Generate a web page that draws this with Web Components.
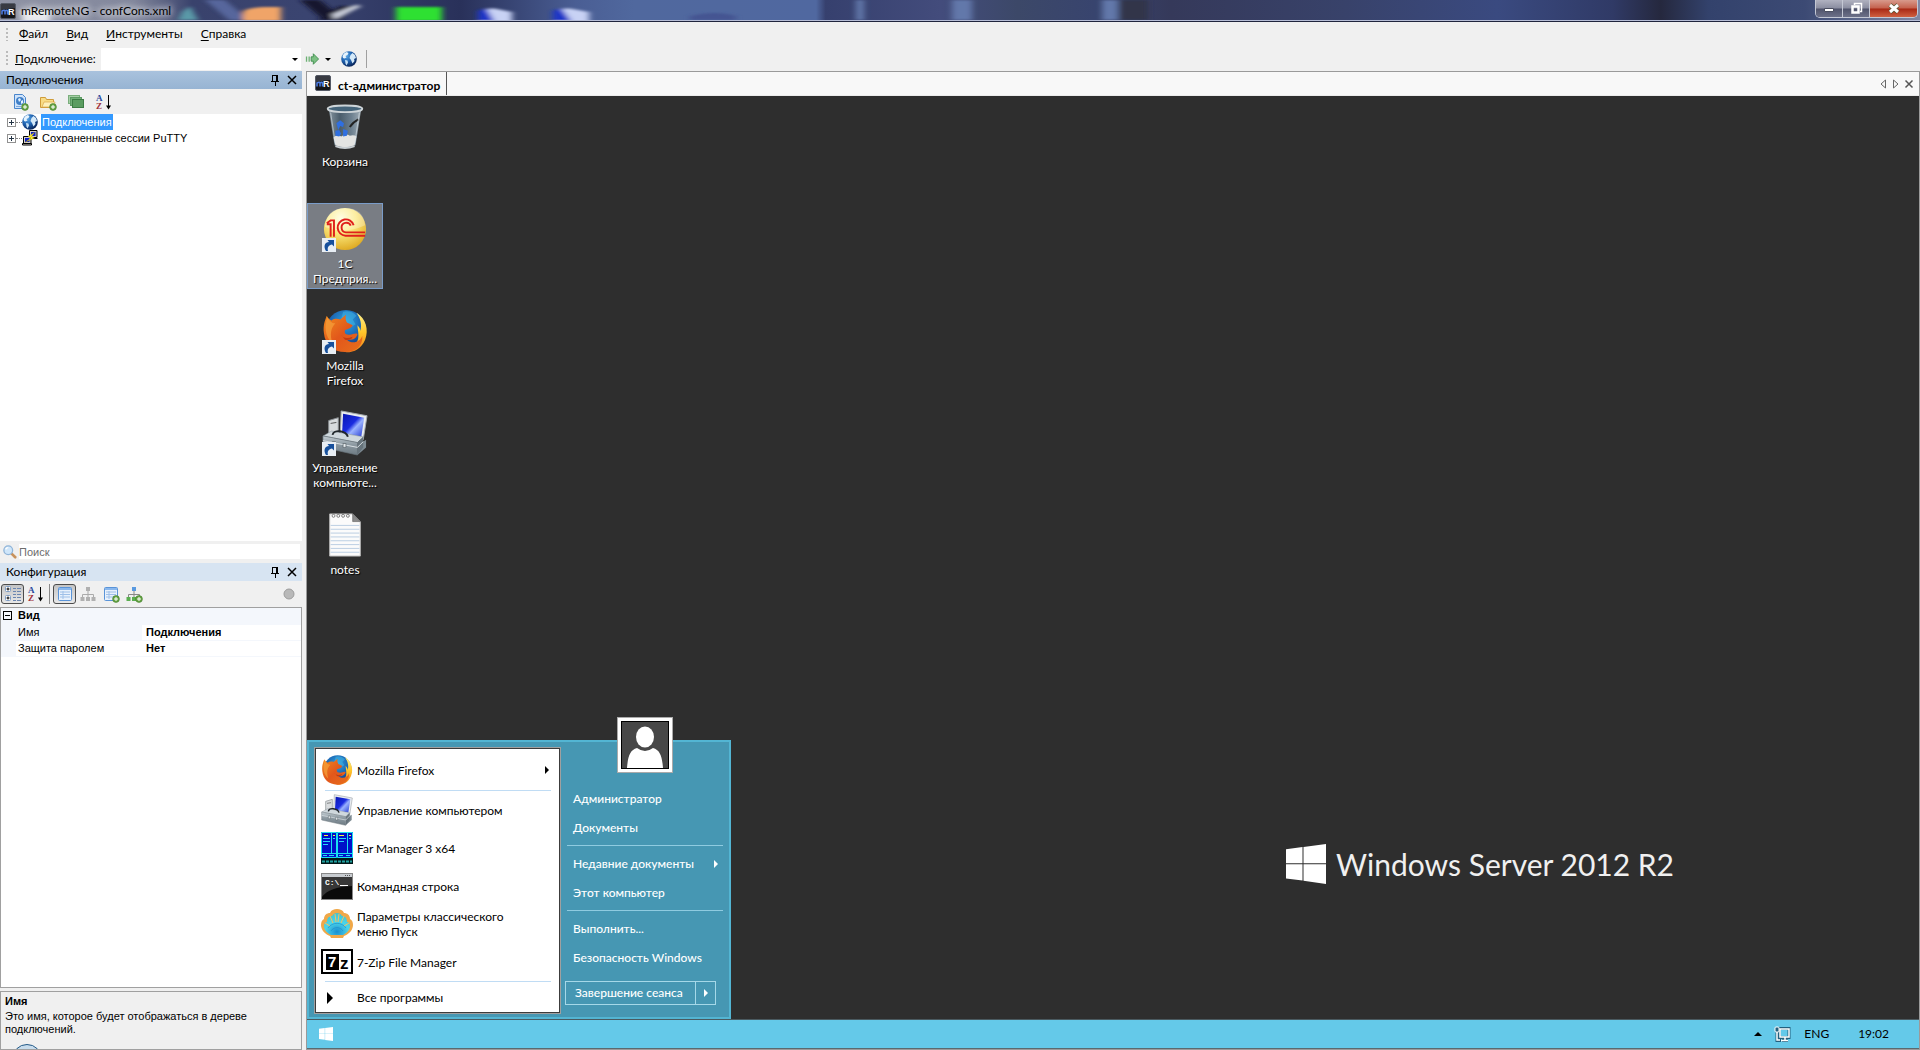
<!DOCTYPE html>
<html lang="ru">
<head>
<meta charset="utf-8">
<title>mRemoteNG - confCons.xml</title>
<style>
  html, body {
    height: 100%;
    margin: 0;
    overflow: hidden;
    background: #f0f0f0;
  }

  body {
    --ui: Lato, "Open Sans", sans-serif;
    --classic: "Liberation Sans", Arial, sans-serif;
    font-family: var(--ui);
    font-size: 12px;
    line-height: 16px;
    color: #000;
  }
</style>
</head>
<body>
<remote-app></remote-app>

<script>
// ---------- icons ----------

const FOX = `
  <defs>
    <radialGradient id="sea" cx=".5" cy=".3" r=".7"><stop offset="0" stop-color="#2fa6e0"/><stop offset=".6" stop-color="#1a5fae"/><stop offset="1" stop-color="#12306e"/></radialGradient>
    <linearGradient id="fur" x1="0" y1="0" x2="1" y2="1"><stop offset="0" stop-color="#f08a1e"/><stop offset=".5" stop-color="#e2571b"/><stop offset="1" stop-color="#e8701c"/></linearGradient>
    <linearGradient id="tail" x1="0" y1="0" x2="0" y2="1"><stop offset="0" stop-color="#fff08a"/><stop offset=".5" stop-color="#ffc52a"/><stop offset="1" stop-color="#f07c1a"/></linearGradient>
  </defs>
  <circle cx="25" cy="23" r="21" fill="url(#sea)"/>
  <path d="M22 4q8-2 14 4l-4 4 3 5-5 3-6-2-4-6z" fill="#3fb4e6" opacity=".55"/>
  <path d="M36 5c10 6 13 18 9 28-4 10-13 14-22 13 9-4 15-9 15-17 0-5-1-8-1-11 2 2 3 4 3 6 2-7 0-13-4-19z" fill="url(#tail)"/>
  <path d="M5 8c1 3 3 4 5 5 3-2 6-2 9-1l6-5c-1 4 0 6 1 8l6 3c-1 3-5 4-8 5-1 4 1 5 5 5 3 0 5-2 8-1-1 5-6 7-11 6 5 5 14 3 16-4 1 10-6 17-18 17C12 46 3 38 2 26 1 18 3 13 5 8z" fill="url(#fur)"/>
  <path d="M6 9c-4 9-3 21 5 28-3-9-2-16 3-21-4 0-7-3-8-7z" fill="#f6a13a" opacity=".7"/>
  <path d="M20 28c2 4 7 4 12 2-1 3-5 4-8 3z" fill="#c23a12"/>`;

const TOOLBOX = `
  <defs>
    <linearGradient id="scr" x1="0" y1="0" x2="1" y2="1"><stop offset="0" stop-color="#0716b0"/><stop offset=".45" stop-color="#1a2be0"/><stop offset=".6" stop-color="#9ab2ff"/><stop offset="1" stop-color="#2036d0"/></linearGradient>
    <linearGradient id="box" x1="0" y1="0" x2="0" y2="1"><stop offset="0" stop-color="#c4ced4"/><stop offset=".45" stop-color="#8d9aa2"/><stop offset="1" stop-color="#6d7a82"/></linearGradient>
  </defs>
  <path d="M7 11l10-3v20H7z" fill="#d9dcde" stroke="#8a8f93"/><path d="M9 14l6-1" stroke="#555"/>
  <path d="M20 1l27 5-4 25-24-4z" fill="#e9ecef" stroke="#a5abb0"/>
  <path d="M22 4l22 4-3 20-20-4z" fill="url(#scr)"/>
  <path d="M38 36l8-5v8l-9 8z" fill="#7e8b93"/>
  <path d="M1 27l9-5 33 6-6 6z" fill="#cfd8dd" stroke="#7b878e" stroke-width=".5"/>
  <path d="M37 34l6-6v11l-6 8z" fill="#66737b"/>
  <path d="M1 27l36 7v13L1 39z" fill="url(#box)" stroke="#69757c" stroke-width=".7"/>
  <path d="M1 32l36 7 6-6" fill="none" stroke="#dce3e7"/>
  <path d="M11 26c1-6 14-5 16 2" fill="none" stroke="#20262a" stroke-width="2"/>
  <path d="M11 33h3v4h-3zM22 35h3v4h-3z" fill="#e6ecef" stroke="#414b51" stroke-width=".6"/>`;

const PLUS = `<circle cx="13" cy="13" r="3.4" fill="#67a544" stroke="#3f7a2c" stroke-width=".6"/><path d="M13 11v4M11 13h4" stroke="#fff"/>`;

const GLOBE = `
  <defs><radialGradient id="g" cx=".35" cy=".3" r=".75"><stop offset="0" stop-color="#5aa6e4"/><stop offset=".5" stop-color="#1f62b0"/><stop offset="1" stop-color="#061f52"/></radialGradient></defs>
  <circle cx="8" cy="8" r="7.8" fill="url(#g)"/>
  <path d="M1.500 5q1-3 4-4l2 1-1 2-2 1 1 1.500-2 1L2 7z" fill="#e8f4fd"/>
  <path d="M4 9l2.500.5.5 2-1.500 3-1-2z" fill="#c4e0f6"/>
  <path d="M9.500 4l2-2 2.500 2 1 3-2 1 .5 2-2 2.500L10 9 8.500 7z" fill="#d4e9f9"/>`;

const AZ = `
  <text x="0" y="7" font-family="Liberation Serif" font-weight="700" font-size="9" fill="#28489c">A</text>
  <text x="0" y="15" font-family="Liberation Serif" font-weight="700" font-size="9" fill="#a0323c">Z</text>
  <path d="M12.500 1v12" stroke="#000"/><path d="M10 11.500h5l-2.500 4z"/>`;

const SHEET = `<rect x="1.500" y="1.500" width="13" height="13" rx="1" fill="#e8f1fc" stroke="#5a94d8"/><path d="M2 3h12" stroke="#8ab8ee" stroke-width="2"/><path d="M3 6h10M3 8.500h10M3 11h10M6 5v8" stroke="#9fc0e8"/>`;

const WINFLAG = `<path d="M0 5.300l16.500-2.200v16.200H0zM17.500 3L40 0v19.300H17.500zM0 20.300h16.500v16.300L0 34.500zM17.500 20.300H40V40l-22.500-3.200z" fill="#fff"/>`;

const ICONS = {
  mr: [16, `<rect x=".5" y=".5" width="15" height="15" rx="1.500" fill="#15161a" stroke="#555a66"/><path d="M1 1h14v4L1 7z" fill="#50545e" opacity=".6"/><path d="M2 11.500V8q3-1.500 3 0v3.500M5 8q2.500-1.500 2.500 0v3.500" fill="none" stroke="#4f7fe8" stroke-width="1.500"/><text x="8" y="12" font-family="Liberation Sans" font-weight="700" font-size="9" fill="#fff">R</text>`],
  globe: [16, GLOBE],
  az: [16, AZ],
  connect: [16, `<path d="M1 5h1.500v6H1zM4 5h1.500v6H4z" fill="#6cb073"/><path d="M7 5.500h2.500V2L15.500 8 9.500 14v-3.500H7z" fill="#7cc083" stroke="#3c8c4a"/>`],
  "new-connection": [16, `<path d="M2.500.5h8l3 3v11h-11z" fill="#cfe3fa" stroke="#4a86cc"/><circle cx="8" cy="7" r="4" fill="#3f7fc8"/><path d="M6 5l2-1 1 2-2 2zM9 7l2-1v3l-2 1z" fill="#e4f2ff"/><path d="M4 12.500h5" stroke="#7aa8dc"/>${PLUS}`],
  "new-folder": [16, `<path d="M.5 3.500h5l1 2h7v8H.5z" fill="#f8dc86" stroke="#cf9c3a"/><path d="M2 13l2-5h11l-1 5z" fill="#fdf0bc" stroke="#d8a848" stroke-width=".7"/>${PLUS}`],
  stack: [16, `<rect x=".5" y="1.500" width="11" height="8" fill="#a6cfa6" stroke="#7aae7c"/><rect x="2.500" y="3.500" width="11" height="8" fill="#72b078" stroke="#5c9a62"/><rect x="4.500" y="5.500" width="11" height="8" fill="#5a9c60" stroke="#3c7c44"/>`],
  putty: [16, `
    <path d="M7.500.5h7.500v7H7.500z" fill="#d4d0c8" stroke="#000"/><path d="M9 2h4.500v4H9z" fill="#1020c8"/><path d="M9 8.500h6.500" stroke="#000"/>
    <path d="M1.500 6.500H9v7H1.500z" fill="#d4d0c8" stroke="#000"/><path d="M3 8h4.500v4H3z" fill="#1020c8"/><path d="M.5 15h9v-1.500h-9z" fill="#d4d0c8" stroke="#000"/>
    <path d="M12.500 2.500L6 6.500l3 1.500-5.500 4 9-4-3-1.500z" fill="#ffee28" stroke="#a89800" stroke-width=".4"/>`],
  search: [16, `<path d="M9.500 9.500l4.500 4.500" stroke="#c8925c" stroke-width="3" stroke-linecap="round"/><circle cx="6" cy="6" r="5" fill="#cfe6fa" stroke="#8fb4d8" stroke-width="1.500"/><path d="M3 5q1-2 3-2" stroke="#fff" fill="none" stroke-width="1.500"/>`],
  pin: [16, `<path d="M5.500 9V3.500h5V9M9.500 4v5M4 9.500h8M8.500 10v4" fill="none" stroke="#000" shape-rendering="crispEdges"/>`],
  close: [16, `<path d="M4 4l8 8M12 4l-8 8" stroke="#000" stroke-width="1.500"/>`],
  categories: [20, `<rect x="2.500" y="2.500" width="5" height="5" rx="1" fill="#fff" stroke="#7e9cc4"/><path d="M3.500 5h3M5 3.500v3" stroke="#000"/><rect x="2.500" y="11.500" width="5" height="5" rx="1" fill="#fff" stroke="#7e9cc4"/><path d="M3.500 14h3M5 12.500v3" stroke="#000"/><path d="M10 4.500h3M14 4.500h4M10 7.500h3M14 7.500h4M10 10.500h3M14 10.500h4M10 13.500h3M14 13.500h4M10 16.500h3M14 16.500h4" stroke="#6b86b0"/>`],
  sheet: [16, SHEET],
  "sheet-add": [16, SHEET + PLUS],
  inherit: [16, `<path d="M8 5v3M2.500 11V8.500h11V11M8 8v3" fill="none" stroke="#aaa"/><path d="M6 1h4v4H6zM.5 11h4v4h-4zM6 11h4v4H6zM11.500 11h4v4h-4z" fill="#b0b0b0"/>`],
  "inherit-add": [16, `<path d="M8 5v3M2.500 11V8.500h11V11M8 8v3" fill="none" stroke="#888"/><path d="M6 1h4v4H6z" fill="#5a9ae0"/><path d="M.5 11h4v4h-4zM6 11h4v4H6z" fill="#5aae50"/>${PLUS}`],
  status: [16, `<circle cx="8" cy="8" r="5" fill="#b8b8b8" stroke="#9c9c9c"/>`],
  recycle: [48, `
    <defs><linearGradient id="can" x1="0" x2="1"><stop offset="0" stop-color="#8d9eaa"/><stop offset=".35" stop-color="#4d6272"/><stop offset=".7" stop-color="#74899a"/><stop offset="1" stop-color="#aebcc6"/></linearGradient></defs>
    <path d="M7 5l6 38q11 5 22 0l6-38z" fill="url(#can)" opacity=".9"/>
    <path d="M12 35q4-4 8-1 5-4 9-1 5-1 7 1l-2 9q-10 4-20 0z" fill="#e4e4e2"/>
    <path d="M15 20l4-3 4 3-1 4-3-1-2 4zM14 28l4-1 2 4-2 3-4-1zM22 26l5 2-1 5-4 1v-3z" fill="#2f6fe0"/>
    <path d="M38 16q-6 3-9 8" stroke="#222" fill="none" stroke-width="2"/>
    <ellipse cx="24" cy="5" rx="18" ry="3.500" fill="#45647a" stroke="#cdd4d8" stroke-width="2"/>
    <path d="M9 9l5 33M39 9l-5 33" stroke="#dde5ea" opacity=".6"/>
    <path d="M14 44q10 4 20 0" stroke="#c8ced2" stroke-width="2" fill="none"/>`],
  onec: [48, `
    <defs><radialGradient id="ball" cx=".4" cy=".25" r=".8"><stop offset="0" stop-color="#fffdd8"/><stop offset=".45" stop-color="#fbe77a"/><stop offset="1" stop-color="#dca51c"/></radialGradient></defs>
    <circle cx="24" cy="24" r="22" fill="url(#ball)"/>
    <path d="M3 22q20 8 42-2-2-18-21-18T3 22z" fill="#fff" opacity=".3"/>
    <g fill="none" stroke="#e0201c" stroke-width="2">
      <path d="M5 18l4-3h3.500v17M5 19h4v13"/>
      <path d="M33 20a8.500 8.500 0 1 0-8.500 11H45M30 20.500a5 5 0 1 0-5 7H45"/>
    </g>`],
  firefox: [48, FOX],
  toolbox: [48, TOOLBOX],
  notes: [48, `
    <path d="M8 2h24l8 8v36H8z" fill="#fbfbfb" stroke="#b8b8b8"/>
    <path d="M9 14h30M9 18h30M9 22h30M9 26h30M9 30h30M9 34h30M9 38h30M9 42h30" stroke="#b9cde2"/>
    <g fill="#fff" stroke="#777"><circle cx="12" cy="4" r="1.500"/><circle cx="17" cy="4" r="1.500"/><circle cx="22" cy="4" r="1.500"/><circle cx="27" cy="4" r="1.500"/></g>
    <path d="M32 2v8h8z" fill="#8a8a8a" stroke="#555" stroke-width=".6"/>`],
  far: [32, `
    <rect width="32" height="32" fill="#0010c8"/><path d="M0 26h32v6H0z" fill="#001818"/>
    <path d="M.5.5h15v25H.5zM16.500.5h15v25h-15zM10.500 0v21M26.500 0v21M0 21.500h32" fill="none" stroke="#18e0f0"/>
    <path d="M3 3.500h4M12 3.500h2M18 3.500h5M28 3.500h2" stroke="#f8f040"/>
    <path d="M2 6.500h7M2 9.500h7M2 12.500h5M18 6.500h7M18 9.500h5M28 6.500h2M12 6.500h2M2 23.500h4M8 23.500h5M18 23.500h4M25 23.500h4" stroke="#28d8f8"/>
    <path d="M1 29.500h30" stroke="#20a0a0" stroke-width="2" stroke-dasharray="3 1"/>`],
  cmd: [32, `
    <rect x=".5" y="3.500" width="31" height="26" fill="#0a0a0a" stroke="#888"/><path d="M1 4h30v3H1z" fill="#c8ccd0"/><path d="M24 5.500h6" stroke="#555" stroke-dasharray="1 1"/>
    <path d="M1 7h30v9Q8 17 1 27z" fill="#555" opacity=".6"/>
    <text x="4" y="15" font-family="Liberation Mono" font-weight="700" font-size="8" fill="#fff">C:\\</text><path d="M19 15.500h8" stroke="#fff"/>`],
  shell: [32, `
    <defs><radialGradient id="sh" cx=".5" cy=".85" r=".9"><stop offset="0" stop-color="#1a8ed0"/><stop offset=".5" stop-color="#4cd6ea"/><stop offset="1" stop-color="#40c0cc"/></radialGradient></defs>
    <path d="M9 28c-5-2-9-6-9-11 0-3 1-5 3-6 0-4 3-6 6-6 1-3 4-4 7-4s6 1 7 4c3 0 6 2 6 6 2 1 3 3 3 6 0 5-4 9-9 11l-1 2H10z" fill="#f0a848"/>
    <path d="M10 27c-4-2-7-5-7-9 0-2 1-4 3-4 0-4 2-6 5-6 1-2 3-3 5-3s4 1 5 3c3 0 5 2 5 6 2 0 3 2 3 4 0 4-3 7-7 9z" fill="url(#sh)"/>
    <path d="M15 14l-1-8M12 15L9 8M9 18l-5-3M17 14l1-8M20 15l3-7M23 18l5-3" stroke="#f4c060" fill="none"/>
    <path d="M10 23a7 7 0 0 1 12 0M7 20a11 11 0 0 1 18 0" stroke="#1c88c8" fill="none" opacity=".6"/>`],
  sevenzip: [32, `
    <rect x="1" y="4" width="30" height="23" fill="#fff" stroke="#000" stroke-width="2"/><rect x="5" y="8" width="13" height="16"/>
    <text x="7" y="21" font-family="Liberation Sans" font-weight="700" font-size="15" fill="#fff">7</text>
    <text x="19" y="23" font-family="Liberation Sans" font-weight="700" font-size="17" fill="#000">z</text>`],
  flag: [40, WINFLAG],
  shortcut: [14, `<rect width="14" height="14" fill="#e8eef4"/><path d="M4 13c-3-5-1-9 3-9L5.500 2H12v6.500L10 6.500C7 7 5 9 6 13z" fill="#17509c"/>`],
  user: [46, `<path d="M0 0h46v46H0z" fill="#474747"/><ellipse cx="23" cy="15" rx="9" ry="10.500" fill="#fff"/><path d="M5 46c1-12 3-18 10-20q8 6 16 0c7 2 9 8 10 20z" fill="#fff"/>`],
  network: [16, `
    <path d="M5 2.500h10v9H5zM8 14.500h6M11 12v2" fill="none" stroke="#23607e" stroke-width="3"/><path d="M3 6v8.500h4" fill="none" stroke="#23607e" stroke-width="3"/>
    <path d="M6 3h9v8H6zM7 14.500h7M11 11v3M3 6v8h3" fill="none" stroke="#fff" stroke-width="1.500"/>
    <rect x="1" y="1" width="4" height="5" rx="1" fill="#23607e" stroke="#fff"/>`],
  right: [8, `<path d="M2 0l4 4-4 4z" fill="currentColor"/>`],
  down: [8, `<path d="M1 3h6L4 6z" fill="currentColor"/>`],
  up: [8, `<path d="M0 6h8L4 2z" fill="currentColor"/>`],
  "tab-left": [10, `<path d="M7.500 1v8L3 5z" fill="none" stroke="#666"/>`],
  "tab-right": [10, `<path d="M2.500 1v8L7 5z" fill="none" stroke="#666"/>`],
  "tab-close": [10, `<path d="M1.500 1.500l7 7M8.500 1.500l-7 7" stroke="#555" stroke-width="1.500"/>`]
};

class UiIcon extends HTMLElement {
  connectedCallback() {
    const [box, body] = ICONS[this.getAttribute("name")];
    const size = this.getAttribute("size") || box;
    this.attachShadow({ mode: "open" }).innerHTML = `
      <style>
        :host { display: inline-block; flex: none; line-height: 0; }
        svg { display: block; overflow: visible; }
      </style>
      <svg width="${size}" height="${size}" viewBox="0 0 ${box} ${box}" aria-hidden="true">${body}</svg>
    `;
  }
}

// Shared by every element that holds plain controls
const RESET = `
  button, input, select {
    margin: 0;
    padding: 0;
    border: 0;
    background: none;
    font: inherit;
    color: inherit;
    text-align: left;
  }
  button { display: flex; align-items: center; }
`;

class BaseElement extends HTMLElement {
  connectedCallback() {
    if (this.shadowRoot) return;
    this.attachShadow({ mode: "open" }).innerHTML = `<style>${RESET}</style>${this.template()}`;
  }
}

// ---------- window chrome ----------

class TitleBar extends BaseElement {
  template() {
    return `
      <style>
        :host {
          display: grid;
          height: 21px;
          border-bottom: 1px solid #20253e;
          overflow: hidden;
        }
        .glass, .row { grid-area: 1 / 1; min-width: 0; }
        .glass { width: 100%; height: 20px; display: block; border-bottom: 1px solid #b6bdd6; }
        .row { display: flex; justify-content: space-between; z-index: 1; }
        .caption { display: flex; align-items: center; gap: 5px; padding-right: 4px; }
        .caption span { text-shadow: 0 0 6px #fff, 0 0 10px #fff; }
        .buttons {
          display: flex;
          height: 17px;
          margin-right: 2px;
          border: 1px solid #c4c8d4;
          border-top: 0;
          border-radius: 0 0 5px 5px;
          overflow: hidden;
        }
        .buttons button {
          width: 27px;
          justify-content: center;
          border-right: 1px solid #c4c8d4;
          background: linear-gradient(#b0b2c0, #8a8da0 48%, #50546c 52%, #6c7088);
        }
        .buttons .x {
          width: 47px;
          border: 0;
          background: linear-gradient(#d89a8c, #c4604c 48%, #a82814 52%, #d06040);
        }
      </style>
      <svg class="glass" viewBox="0 0 1920 20" preserveAspectRatio="none" aria-hidden="true">
        <defs>
          <linearGradient id="base">
            <stop offset="0" stop-color="#8f93a4"/><stop offset=".07" stop-color="#82879c"/>
            <stop offset=".1" stop-color="#39426c"/><stop offset=".16" stop-color="#3a4470"/>
            <stop offset=".24" stop-color="#29315a"/><stop offset=".3" stop-color="#4a5e94"/>
            <stop offset=".33" stop-color="#50689e"/><stop offset=".425" stop-color="#5068a0"/>
            <stop offset=".43" stop-color="#36406e"/><stop offset=".49" stop-color="#434c7c"/>
            <stop offset=".53" stop-color="#3c4868"/><stop offset=".57" stop-color="#38446e"/>
            <stop offset=".61" stop-color="#35395a"/><stop offset=".7" stop-color="#38426a"/>
            <stop offset=".78" stop-color="#3a4a80"/><stop offset=".84" stop-color="#303a66"/>
            <stop offset=".865" stop-color="#25283e"/><stop offset=".89" stop-color="#33426c"/>
            <stop offset=".94" stop-color="#3c4a74"/><stop offset="1" stop-color="#8088a4"/>
          </linearGradient>
          <filter id="soft" x="-20%" width="140%" y="-40%" height="180%"><feGaussianBlur stdDeviation="3 1"/></filter>
        </defs>
        <path d="M0 0h1920v20H0z" fill="url(#base)"/>
        <g filter="url(#soft)">
          <path d="M22 10h28v14H22z" fill="#e4e6ec"/>
          <path d="M182 12l8-6 8 14h-20z" fill="#5a9aa8"/>
          <path d="M205 0h20l24 20h-20z" fill="#56669c"/>
          <path d="M243 12q2-4 20-5h18v14h-38z" fill="#f0a468"/>
          <path d="M300 0h20l24 20h-20zM340 6h18l-18 14h-22z" fill="#14182e"/>
          <path d="M332 14l26-10 2 3-26 13z" fill="#c8ccd8"/>
          <path d="M396 7h46v14h-46z" fill="#2ee030"/>
          <path d="M478 12l14-4 20 4v10h-34z" fill="#c8d2f4"/><path d="M478 11l8-3 8 13h-16z" fill="#1a34c8"/>
          <path d="M553 12l14-4 22 4v10h-36z" fill="#c8d2f4"/><path d="M553 11l8-3 10 13h-18z" fill="#1a34c8"/>
          <path d="M690 16q26-6 46 0v4h-46z" fill="#445492"/>
          <path d="M856 0h8v20h-8zM952 0h20v20h-20zM1102 0h16v20h-16z" fill="#6278aa"/>
          <path d="M1120 0h28v20h-28z" fill="#30344a"/>
        </g>
      </svg>
      <div class="row">
        <div class="caption"><ui-icon name="mr"></ui-icon><span>mRemoteNG - confCons.xml</span></div>
        <div class="buttons">
          <button aria-label="Свернуть"><svg width="12" height="8"><path d="M1.500 3.500h9v3h-9z" fill="#fff" stroke="#4a4e60"/></svg></button>
          <button aria-label="Свернуть в окно"><svg width="13" height="13"><path d="M4.500 3V1.500h7v8H10" fill="none" stroke="#fff" stroke-width="1.500"/><path d="M2.500 4.500h6v6h-6z" fill="none" stroke="#fff" stroke-width="2.500"/></svg></button>
          <button class="x" aria-label="Закрыть"><svg width="12" height="11"><path d="M2 2l8 7M10 2L2 9" stroke="#553" stroke-width="4.500"/><path d="M2 2l8 7M10 2L2 9" stroke="#fff" stroke-width="3"/></svg></button>
        </div>
      </div>
    `;
  }
}

class MenuBar extends BaseElement {
  template() {
    const items = ["Файл", "Вид", "Инструменты", "Справка"];
    return `
      <style>
        :host { display: block; height: 24px; padding-left: 6px; }
        nav { display: flex; align-items: center; height: 100%; gap: 18px; }
        nav::before {
          content: "";
          width: 2px;
          height: 13px;
          margin-right: -7px;
          background: repeating-linear-gradient(#bbb 0 2px, transparent 2px 4px);
        }
        u { text-underline-offset: 2px; }
      </style>
      <nav>${items.map((t) => `<button><span><u>${t[0]}</u>${t.slice(1)}</span></button>`).join("")}</nav>
    `;
  }
}

class QuickConnect extends BaseElement {
  template() {
    return `
      <style>
        :host { display: flex; align-items: center; height: 25px; padding-left: 6px; }
        :host::before {
          content: "";
          width: 2px;
          height: 16px;
          margin-right: 7px;
          background: repeating-linear-gradient(#bbb 0 2px, transparent 2px 4px);
        }
        label { width: 86px; }
        .combo { display: grid; align-items: center; width: 200px; height: 22px; background: #fff; }
        .combo > * { grid-area: 1 / 1; }
        select { appearance: none; width: 100%; height: 22px; padding: 0 14px 0 4px; }
        .combo ui-icon { justify-self: end; margin-right: 2px; pointer-events: none; }
        .go { gap: 5px; margin-left: 4px; }
        .web { margin-left: 9px; }
        i { width: 1px; height: 18px; margin-left: 9px; background: #a0a0a0; }
      </style>
      <label for="host"><u>П</u>одключение:</label>
      <span class="combo">
        <select id="host"><option></option></select>
        <ui-icon name="down" size="8"></ui-icon>
      </span>
      <button class="go" aria-label="Подключить"><ui-icon name="connect" size="14"></ui-icon><ui-icon name="down" size="8"></ui-icon></button>
      <button class="web" aria-label="Интернет"><ui-icon name="globe"></ui-icon></button>
      <i></i>
    `;
  }
}

// ---------- left side ----------

class DockPanel extends BaseElement {
  template() {
    return `
      <style>
        :host { display: flex; flex-direction: column; min-height: 0; }
        header {
          display: flex;
          align-items: center;
          height: 18px;
          padding: 0 2px 0 6px;
          background: var(--panel-head, #d7e4f2);
        }
        h2 { flex: 1; margin: 0; font: inherit; }
        header button + button { margin-left: 1px; }
      </style>
      <header>
        <h2>${this.getAttribute("caption")}</h2>
        <button aria-label="Закрепить"><ui-icon name="pin"></ui-icon></button>
        <button aria-label="Закрыть"><ui-icon name="close"></ui-icon></button>
      </header>
      <slot></slot>
    `;
  }
}

class ConnectionTree extends BaseElement {
  template() {
    return `
      <style>
        :host {
          display: flex;
          flex: 1;
          flex-direction: column;
          min-height: 0;
          font-family: var(--classic);
          font-size: 11px;
        }
        .tools { display: flex; align-items: center; gap: 12px; height: 25px; padding-left: 12px; }
        ul { flex: 1; margin: 0; padding: 0 0 0 7px; list-style: none; background: #fff; }
        li { display: flex; align-items: center; height: 16px; }
        .box {
          width: 7px;
          height: 7px;
          border: 1px solid #919191;
          background:
            linear-gradient(#234, #234) center / 5px 1px no-repeat,
            linear-gradient(#234, #234) center / 1px 5px no-repeat,
            #fff;
        }
        .dots { width: 6px; border-top: 1px dotted #808080; }
        .name { padding: 0 1px; margin-left: 3px; }
        .selected .name { background: #3399ff; color: #fff; }
        .search {
          display: flex;
          align-items: center;
          gap: 2px;
          height: 22px;
          padding: 0 2px 1px 3px;
          box-sizing: border-box;
        }
        .search input { flex: 1; min-width: 0; height: 15px; background: #fff; outline: 0; }
        input::placeholder { color: #6d6d6d; opacity: 1; }
      </style>
      <div class="tools">
        <button aria-label="Новое подключение"><ui-icon name="new-connection"></ui-icon></button>
        <button aria-label="Новая папка"><ui-icon name="new-folder"></ui-icon></button>
        <button aria-label="Вид"><ui-icon name="stack"></ui-icon></button>
        <button aria-label="Сортировка"><ui-icon name="az"></ui-icon></button>
      </div>
      <ul role="tree">
        <li role="treeitem" class="selected"><span class="box"></span><span class="dots"></span><ui-icon name="globe"></ui-icon><span class="name">Подключения</span></li>
        <li role="treeitem"><span class="box"></span><span class="dots"></span><ui-icon name="putty"></ui-icon><span class="name">Сохраненные сессии PuTTY</span></li>
      </ul>
      <div class="search"><ui-icon name="search" size="14"></ui-icon><input type="text" placeholder="Поиск" aria-label="Поиск"></div>
    `;
  }
}

class PropertyGrid extends BaseElement {
  template() {
    return `
      <style>
        :host {
          display: flex;
          flex: 1;
          flex-direction: column;
          min-height: 0;
          font-family: var(--classic);
          font-size: 11px;
        }
        .tools { display: flex; align-items: center; height: 26px; padding: 0 5px 0 1px; }
        .tools button { justify-content: center; width: 23px; height: 20px; }
        .tools .on {
          width: 21px;
          height: 18px;
          border: 1px solid #4c4c4c;
          border-radius: 3px;
          background: linear-gradient(#c4c4c4, #e8e8e8);
          box-sizing: content-box;
        }
        .tools i { width: 1px; height: 20px; margin: 0 3px 0 2px; background: #8a8a8a; }
        .tools .last { margin-left: auto; width: 16px; }
        .grid { flex: 1; border: 1px solid #a0a0a0; background: #fff; }
        table { width: 100%; border-collapse: collapse; table-layout: fixed; }
        th, td { height: 16px; padding: 0; line-height: 15px; text-align: left; border-bottom: 1px solid #f4f7fc; box-sizing: border-box; }
        .gutter { width: 15px; background: #f4f7fc; }
        .key { width: 126px; font-weight: 400; padding-left: 2px; }
        .group th { background: #f4f7fc; padding-left: 2px; }
        .group th.gutter { padding: 0; }
        td { padding-left: 4px; font-weight: 700; }
        .current .key { background: #f4f7fc; }
        .minus {
          display: block;
          width: 7px;
          height: 7px;
          margin-left: 2px;
          border: 1px solid #000;
          background: linear-gradient(#000, #000) center / 5px 1px no-repeat;
        }
        .help {
          height: 57px;
          margin-top: 3px;
          padding-left: 4px;
          border: 1px solid #a0a0a0;
          overflow: hidden;
        }
        h3, p { margin: 0; font-size: 11px; line-height: 13px; }
        h3 { margin: 2px 0; line-height: 14px; }
        .ring {
          width: 28px;
          height: 28px;
          margin: 8px 0 0 7px;
          border: 1px solid #245a88;
          border-radius: 50%;
          background: #c8dcec;
        }
      </style>
      <div class="tools">
        <button class="on" aria-label="По категориям"><ui-icon name="categories" size="20"></ui-icon></button>
        <button aria-label="По алфавиту"><ui-icon name="az"></ui-icon></button>
        <i></i>
        <button class="on" aria-label="Свойства"><ui-icon name="sheet"></ui-icon></button>
        <button aria-label="Наследование"><ui-icon name="inherit"></ui-icon></button>
        <button aria-label="Свойства по умолчанию"><ui-icon name="sheet-add"></ui-icon></button>
        <button aria-label="Наследование по умолчанию"><ui-icon name="inherit-add"></ui-icon></button>
        <button class="last" aria-label="Состояние"><ui-icon name="status"></ui-icon></button>
      </div>
      <div class="grid">
        <table>
          <colgroup><col style="width: 15px"><col style="width: 126px"><col></colgroup>
          <tr class="group"><th class="gutter"><span class="minus"></span></th><th colspan="2">Вид</th></tr>
          <tr class="current"><td class="gutter"></td><th class="key">Имя</th><td>Подключения</td></tr>
          <tr><td class="gutter"></td><th class="key">Защита паролем</th><td>Нет</td></tr>
        </table>
      </div>
      <div class="help">
        <h3>Имя</h3>
        <p>Это имя, которое будет отображаться в дереве подключений.</p>
        <div class="ring"></div>
      </div>
    `;
  }
}

// ---------- remote session ----------

class TabStrip extends BaseElement {
  template() {
    return `
      <style>
        :host {
          display: flex;
          align-items: stretch;
          justify-content: space-between;
          height: 23px;
          padding-right: 5px;
          border-bottom: 1px solid #ececec;
          background: #f8f8f8;
        }
        .tab {
          gap: 7px;
          padding: 0 6px 0 8px;
          border-right: 1px solid #555;
          font-weight: 700;
        }
        .tab ui-icon { padding-bottom: 2px; }
        .tab span { padding-top: 4px; }
        .nav { display: flex; align-items: center; gap: 3px; }
      </style>
      <button class="tab"><ui-icon name="mr"></ui-icon><span>ct-администратор</span></button>
      <div class="nav">
        <button aria-label="Назад"><ui-icon name="tab-left"></ui-icon></button>
        <button aria-label="Вперёд"><ui-icon name="tab-right"></ui-icon></button>
        <button aria-label="Закрыть"><ui-icon name="tab-close"></ui-icon></button>
      </div>
    `;
  }
}

class DesktopIcon extends BaseElement {
  template() {
    const link = this.hasAttribute("shortcut") ? `<ui-icon class="link" name="shortcut"></ui-icon>` : "";
    return `
      <style>
        :host { display: block; }
        button {
          flex-direction: column;
          gap: 4px;
          width: 76px;
          height: 86px;
          padding-top: 2px;
          border: 1px solid transparent;
          color: #fff;
          line-height: 15px;
        }
        :host([selected]) button { border-color: #7a9cc8; background: #797d84; }
        .art { display: grid; }
        .art > * { grid-area: 1 / 1; }
        .link { align-self: end; z-index: 1; }
        .label { text-align: center; text-shadow: 1px 1px 1px #000; }
      </style>
      <button>
        <span class="art"><ui-icon name="${this.getAttribute("icon")}" size="46"></ui-icon>${link}</span>
        <span class="label"><slot></slot></span>
      </button>
    `;
  }
}

class StartItem extends BaseElement {
  template() {
    const icon = this.getAttribute("icon");
    const arrow = this.hasAttribute("submenu") ? `<ui-icon name="right" size="8"></ui-icon>` : "";
    return `
      <style>
        :host { display: block; }
        button { width: 100%; height: var(--row, 38px); line-height: 15px; }
        .art { display: flex; width: 32px; margin-right: 4px; }
        .art .tri { margin-left: 3px; }
        .label { flex: 1; }
      </style>
      <button>
        ${icon ? `<span class="art">${icon === "right" ? `<ui-icon class="tri" name="right" size="12"></ui-icon>` : `<ui-icon name="${icon}" size="32"></ui-icon>`}</span>` : ""}
        <span class="label"><slot></slot></span>
        ${arrow}
      </button>
    `;
  }
}

class StartMenu extends BaseElement {
  template() {
    return `
      <style>
        :host {
          display: flex;
          gap: 6px;
          width: 424px;
          box-sizing: border-box;
          padding: 5px 6px 3px 5px;
          border: 2px solid #53b5d3;
          background: #4697b3;
        }
        .programs {
          flex: none;
          width: 247px;
          box-sizing: border-box;
          padding: 3px 9px 0 6px;
          border: 1px solid #a0a0a0;
          background: #fff;
          outline: 1px solid #3c3c3c;
          outline-offset: -2px;
        }
        hr { margin: 0; border: 0; border-top: 1px solid #c0dcf4; }
        .programs hr { margin-left: 4px; }
        .programs .first { padding-bottom: 1px; }
        .programs .all { --row: 31px; }
        .places { flex: 1; color: #fff; --row: 29px; font-weight: 500; }
        .places start-item { padding: 0 3px 0 6px; }
        .places hr { margin: 3px 0; border-color: #8fcbe0; }
        .avatar {
          width: 46px;
          height: 46px;
          margin: -26px 0 15px 54px;
          border: 1px solid #000;
          outline: 3px solid #fff;
          box-shadow: 0 0 0 4px #aaa;
        }
        .power { display: flex; width: 151px; height: 24px; margin: 9px 0 0 -2px; box-sizing: border-box; border: 1px solid #a5d8e8; }
        .power .out { flex: 1; padding-left: 9px; }
        .power .more { width: 20px; justify-content: center; border-left: 1px solid #a5d8e8; }
      </style>
      <div class="programs">
        <start-item class="first" icon="firefox" submenu>Mozilla Firefox</start-item>
        <hr>
        <start-item icon="toolbox">Управление компьютером</start-item>
        <start-item icon="far">Far Manager 3 x64</start-item>
        <start-item icon="cmd">Командная строка</start-item>
        <start-item icon="shell">Параметры классического<br>меню Пуск</start-item>
        <start-item icon="sevenzip">7-Zip File Manager</start-item>
        <hr>
        <start-item class="all" icon="right">Все программы</start-item>
      </div>
      <div class="places">
        <div class="avatar"><ui-icon name="user" size="46"></ui-icon></div>
        <start-item>Администратор</start-item>
        <start-item>Документы</start-item>
        <hr>
        <start-item submenu>Недавние документы</start-item>
        <start-item>Этот компьютер</start-item>
        <hr>
        <start-item>Выполнить...</start-item>
        <start-item>Безопасность Windows</start-item>
        <div class="power">
          <button class="out">Завершение сеанса</button>
          <button class="more" aria-label="Другие действия"><ui-icon name="right" size="8"></ui-icon></button>
        </div>
      </div>
    `;
  }
}

class TaskBar extends BaseElement {
  template() {
    return `
      <style>
        :host {
          display: flex;
          align-items: center;
          justify-content: space-between;
          height: 28px;
          padding: 0 30px 0 12px;
          border-top: 1px solid #4a5a60;
          border-bottom: 1px solid #5a6a70;
          background: #64c9e9;
        }
        .tray { display: flex; align-items: center; }
        .net { margin: 0 14px 0 12px; }
        time { margin-left: 29px; }
      </style>
      <button aria-label="Пуск"><ui-icon name="flag" size="14"></ui-icon></button>
      <div class="tray">
        <button aria-label="Показать скрытые значки"><ui-icon name="up" size="8"></ui-icon></button>
        <ui-icon class="net" name="network"></ui-icon>
        <button>ENG</button>
        <time>19:02</time>
      </div>
    `;
  }
}

class RemoteDesktop extends BaseElement {
  template() {
    return `
      <style>
        :host { display: flex; flex-direction: column; min-height: 0; }
        .wallpaper { position: relative; flex: 1; background: #2e2e2e; }
        .icons { display: flex; flex-direction: column; align-items: flex-start; gap: 16px; padding-top: 5px; }
        .brand {
          position: absolute;
          right: 245px;
          bottom: 135px;
          display: flex;
          align-items: center;
          gap: 10px;
          color: #f0f0f0;
          font-size: 30px;
          line-height: 40px;
        }
        start-menu { position: absolute; left: 0; bottom: 0; }
      </style>
      <div class="wallpaper">
        <div class="icons">
          <desktop-icon icon="recycle">Корзина</desktop-icon>
          <desktop-icon icon="onec" shortcut selected>1C<br>Предприя...</desktop-icon>
          <desktop-icon icon="firefox" shortcut>Mozilla<br>Firefox</desktop-icon>
          <desktop-icon icon="toolbox" shortcut>Управление<br>компьюте...</desktop-icon>
          <desktop-icon icon="notes">notes</desktop-icon>
        </div>
        <div class="brand"><ui-icon name="flag" size="40"></ui-icon><span>Windows Server 2012 R2</span></div>
        <start-menu></start-menu>
      </div>
      <task-bar></task-bar>
    `;
  }
}

// ---------- page ----------

class RemoteApp extends BaseElement {
  template() {
    return `
      <style>
        :host { display: flex; flex-direction: column; height: 100vh; }
        main {
          display: grid;
          flex: 1;
          grid-template-columns: 302px 1fr;
          column-gap: 4px;
          min-height: 0;
        }
        .side { display: grid; grid-template-rows: 492fr 487fr; min-height: 0; }
        .active { --panel-head: linear-gradient(#a9c2dd, #97b4d3); }
        .session {
          display: flex;
          flex-direction: column;
          min-height: 0;
          border: 1px solid #9a9a9a;
        }
        remote-desktop { flex: 1; }
      </style>
      <title-bar></title-bar>
      <menu-bar></menu-bar>
      <quick-connect></quick-connect>
      <main>
        <div class="side">
          <dock-panel class="active" caption="Подключения"><connection-tree></connection-tree></dock-panel>
          <dock-panel caption="Конфигурация"><property-grid></property-grid></dock-panel>
        </div>
        <div class="session">
          <tab-strip></tab-strip>
          <remote-desktop></remote-desktop>
        </div>
      </main>
    `;
  }
}

customElements.define("ui-icon", UiIcon);
customElements.define("title-bar", TitleBar);
customElements.define("menu-bar", MenuBar);
customElements.define("quick-connect", QuickConnect);
customElements.define("dock-panel", DockPanel);
customElements.define("connection-tree", ConnectionTree);
customElements.define("property-grid", PropertyGrid);
customElements.define("tab-strip", TabStrip);
customElements.define("desktop-icon", DesktopIcon);
customElements.define("start-item", StartItem);
customElements.define("start-menu", StartMenu);
customElements.define("task-bar", TaskBar);
customElements.define("remote-desktop", RemoteDesktop);
customElements.define("remote-app", RemoteApp);
</script>
</body>
</html>
